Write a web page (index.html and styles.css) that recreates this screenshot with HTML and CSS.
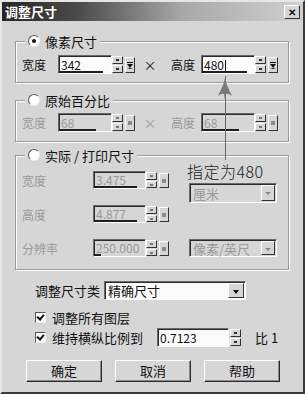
FILE: index.html
```html
<!DOCTYPE html>
<html lang="zh-CN">
<head>
  <meta charset="UTF-8">
  <title>调整尺寸</title>
  <link rel="stylesheet" href="styles.css">
</head>
<body>
<div class="dialog">
  <div class="titlebar">
    <span class="title">调整尺寸</span>
    <span class="close">✕</span>
  </div>

  <div class="content">
    <div class="group g-pixel">
      <div class="legend"><span class="radio on"></span>像素尺寸</div>
      <div class="row">
        <span class="lbl">宽度</span>
        <span class="spin">
          <span class="field" style="--fill: 84%">342</span>
          <span class="updown"><i></i><i></i></span>
          <span class="drop"></span>
        </span>
        <span class="times">×</span>
        <span class="lbl lbl-2">高度</span>
        <span class="spin">
          <span class="field" style="--fill: 86%">480<span class="caret"></span></span>
          <span class="updown"><i></i><i></i></span>
          <span class="drop"></span>
        </span>
      </div>
    </div>

    <div class="group g-percent off">
      <div class="legend"><span class="radio"></span>原始百分比</div>
      <div class="row">
        <span class="lbl">宽度</span>
        <span class="spin">
          <span class="field" style="--fill: 72%">68</span>
          <span class="updown"><i></i><i></i></span>
          <span class="drop"></span>
        </span>
        <span class="times">×</span>
        <span class="lbl lbl-2">高度</span>
        <span class="spin">
          <span class="field" style="--fill: 72%">68</span>
          <span class="updown"><i></i><i></i></span>
          <span class="drop"></span>
        </span>
      </div>
    </div>

    <div class="group g-print off">
      <div class="legend"><span class="radio"></span>实际 / 打印尺寸</div>
      <div class="cols">
        <div class="left">
          <div class="row">
            <span class="lbl lbl-wide">宽度</span>
            <span class="spin small">
              <span class="field" style="--fill: 85%">3.475</span>
              <span class="updown"><i></i><i></i></span>
              <span class="drop"></span>
            </span>
          </div>
          <div class="row">
            <span class="lbl lbl-wide">高度</span>
            <span class="spin small">
              <span class="field" style="--fill: 85%">4.877</span>
              <span class="updown"><i></i><i></i></span>
              <span class="drop"></span>
            </span>
          </div>
          <div class="row">
            <span class="lbl lbl-wide">分辨率</span>
            <span class="spin small">
              <span class="field" style="--fill: 14%">250.000</span>
              <span class="updown"><i></i><i></i></span>
              <span class="drop"></span>
            </span>
          </div>
        </div>
        <div class="right">
          <span class="select unit">厘米<span class="sel-btn"></span></span>
          <span class="select res">像素/英尺<span class="sel-btn"></span></span>
        </div>
      </div>
    </div>

    <div class="line kind">
      <span class="kind-lbl">调整尺寸类</span>
      <span class="select active">精确尺寸<span class="sel-btn"></span></span>
    </div>

    <div class="line check-line layers">
      <span class="check"></span>调整所有图层
    </div>

    <div class="line check-line ratio">
      <span class="check"></span><span class="ratio-lbl">维持横纵比例到</span>
      <span class="spin ratio-spin">
        <span class="field plain">0.7123</span>
        <span class="updown"><i></i><i></i></span>
      </span>
      <span class="ratio-end">比 1</span>
    </div>

    <div class="buttons">
      <span class="btn">确定</span>
      <span class="btn">取消</span>
      <span class="btn">帮助</span>
    </div>
  </div>

  <!-- annotation drawn over the dialog -->
  <div class="note-line"></div>
  <svg class="note-arrow" viewBox="0 0 16 22" width="16" height="22">
    <path d="M8 0 L10 7 Q12 12 15 18 Q11 15 9 16 L8 22 L7 16 Q5 15 1 18 Q4 12 6 7 Z" fill="#7a7a7a"/>
  </svg>
  <div class="note-text">指定为480</div>
</div>
</body>
</html>
```

FILE: styles.css
```css
body {
  margin: 0;
  font-family: "Noto Sans CJK SC", "Noto Sans", sans-serif;
  font-size: 12px;
  color: #111;
}
.dialog {
  position: relative;
  width: 305px;
  height: 394px;
  box-sizing: border-box;
  background: #d6d6d6;
  border: 2px solid;
  border-color: #e6e6e6 #3a3a3a #3a3a3a #e6e6e6;
  overflow: hidden;
}
.titlebar {
  height: 19px;
  display: flex;
  align-items: center;
  justify-content: space-between;
  padding: 0 3px 0 3px;
  background: linear-gradient(to right, #262626 0%, #4a4a4a 25%, #a8a8a8 60%, #d0d0d0 100%);
}
.title {
  color: #fff;
  font-weight: bold;
  font-size: 13px;
  line-height: 19px;
}
.close {
  width: 14px;
  height: 12px;
  margin-top: 1px;
  background: #d6d6d6;
  border: 1px solid;
  border-color: #fff #333 #333 #fff;
  font-size: 10px;
  font-weight: bold;
  line-height: 12px;
  text-align: center;
}
.content {
  padding: 20px 14px 0 13px;
}

/* group frames */
.group {
  border: 1px solid #9a9a9a;
  box-shadow: inset 1px 1px 0 #fff, 1px 1px 0 #fff;
  padding: 0 0 0 6px;
}
.legend {
  display: flex;
  align-items: center;
  gap: 5px;
  width: fit-content;
  height: 16px;
  margin: -9px 0 0 3px;
  padding: 0 3px 0 3px;
  background: #d6d6d6;
  font-size: 13px;
}
.g-pixel .row { margin: 6px 0 8px; }
.g-percent { margin-top: 17px; }
.g-percent .row { margin: 5px 0 9px; }
.g-print { margin-top: 13px; padding-bottom: 12px; }

.radio {
  position: relative;
  width: 10px;
  height: 10px;
  border-radius: 50%;
  background: #fff;
  border: 1px solid;
  border-color: #555 #eee #eee #555;
}
.radio.on::after {
  content: "";
  position: absolute;
  left: 3px;
  top: 3px;
  width: 4px;
  height: 4px;
  border-radius: 50%;
  background: #111;
}

.row {
  display: flex;
  align-items: center;
  height: 19px;
}
.lbl { width: 36px; }
.lbl-2 { width: 30px; margin-left: 6px; }
.lbl-wide { width: 71px; }
.times {
  width: 30px;
  text-align: center;
  font-size: 13px;
}

/* spin box: field + up/down + menu button */
.spin {
  display: inline-flex;
  align-items: center;
}
.field {
  position: relative;
  box-sizing: border-box;
  width: 54px;
  height: 19px;
  padding-left: 2px;
  background: #fbfbfb;
  border: 1px solid;
  border-color: #6a6a6a #fff #fff #6a6a6a;
  box-shadow: inset 1px 1px 0 #2a2a2a;
  line-height: 17px;
  font-size: 12px;
}
.field::after {
  content: "";
  position: absolute;
  left: 0;
  bottom: 0;
  width: var(--fill, 0);
  height: 2px;
  background: #1e1e1e;
}
.caret {
  display: inline-block;
  width: 1px;
  height: 12px;
  margin-left: 1px;
  background: #000;
  vertical-align: -2px;
}
.updown {
  display: flex;
  flex-direction: column;
  gap: 1px;
  width: 11px;
  height: 17px;
}
.updown i {
  flex: 1;
  position: relative;
  background: #d6d6d6;
  border: 1px solid;
  border-color: #fff #333 #333 #fff;
}
.updown i::after {
  content: "";
  position: absolute;
  left: 3px;
  top: 2px;
  width: 3px;
  height: 2px;
  background: #333;
}
.drop {
  position: relative;
  box-sizing: border-box;
  width: 10px;
  height: 16px;
  margin-left: 2px;
  background: #d6d6d6;
  border: 1px solid;
  border-color: #fff #333 #333 #fff;
}
.drop::before {
  content: "";
  position: absolute;
  left: 1px;
  top: 4px;
  width: 6px;
  height: 1px;
  background: #111;
}
.drop::after {
  content: "";
  position: absolute;
  left: 1px;
  top: 6px;
  border-left: 3px solid transparent;
  border-right: 3px solid transparent;
  border-top: 4px solid #111;
  border-bottom: 1px solid #111;
}

/* disabled groups */
.off .lbl, .off .times, .off .field { color: #9a9a9a; }
.off .field { background: #d6d6d6; }
.off .drop::before { display: none; }
.off .drop::after {
  left: 2px;
  top: 5px;
  width: 4px;
  height: 4px;
  border: 0;
  background: #8a8a8a;
}
.off .updown i::after { background: #777; }

.small .field { width: 53px; height: 18px; line-height: 16px; }
.small .updown { height: 16px; }
.small .drop { height: 15px; }

/* print size columns */
.cols {
  display: flex;
  margin-top: 8px;
}
.left {
  display: flex;
  flex-direction: column;
  gap: 16px;
}
.left .row { height: 18px; }
.right {
  display: flex;
  flex-direction: column;
  margin-left: 20px;
}
.select {
  position: relative;
  box-sizing: border-box;
  display: flex;
  align-items: center;
  width: 88px;
  height: 20px;
  padding-left: 3px;
  border: 1px solid;
  border-color: #6a6a6a #fff #fff #6a6a6a;
  box-shadow: inset 1px 1px 0 #2a2a2a;
  color: #9a9a9a;
  font-size: 13px;
}
.select.unit { margin-top: 12px; }
.select.res { margin-top: 36px; height: 18px; }
.sel-btn {
  position: absolute;
  right: 1px;
  top: 1px;
  bottom: 1px;
  width: 14px;
  background: #d6d6d6;
  border: 1px solid;
  border-color: #fff #333 #333 #fff;
  box-sizing: border-box;
}
.sel-btn::after {
  content: "";
  position: absolute;
  left: 3px;
  top: 6px;
  border-left: 3px solid transparent;
  border-right: 3px solid transparent;
  border-top: 3px solid #888;
}
.select.active {
  width: 142px;
  height: 19px;
  background: #fbfbfb;
  color: #111;
}
.select.active .sel-btn { width: 16px; }
.select.active .sel-btn::after {
  left: 4px;
  border-top: 4px solid #111;
}

/* bottom options */
.line {
  display: flex;
  align-items: center;
  padding-left: 20px;
}
.kind {
  margin-top: 11px;
  height: 19px;
  font-size: 13px;
}
.kind-lbl { width: 69px; }
.check-line { font-size: 13px; }
.layers { margin-top: 10px; height: 14px; }
.ratio { margin-top: 4px; height: 19px; }
.check {
  position: relative;
  box-sizing: border-box;
  width: 11px;
  height: 11px;
  margin-right: 6px;
  background: #fbfbfb;
  border: 1px solid;
  border-color: #555 #eee #eee #555;
}
.check::after {
  content: "";
  position: absolute;
  left: 2px;
  top: 0px;
  width: 3px;
  height: 5px;
  border: solid #111;
  border-width: 0 2px 2px 0;
  transform: rotate(40deg);
}
.ratio-lbl { width: 105px; }
.ratio-spin .field {
  width: 72px;
  height: 19px;
  font-size: 12px;
}
.ratio-spin .updown { margin-left: 1px; }
.ratio-end { margin-left: 14px; }

.buttons {
  display: flex;
  gap: 13px;
  margin-top: 13px;
  padding-left: 11px;
}
.btn {
  box-sizing: border-box;
  width: 76px;
  height: 22px;
  background: #d6d6d6;
  border: 1px solid;
  border-color: #fff #2a2a2a #2a2a2a #fff;
  box-shadow: inset -1px -1px 0 #8a8a8a;
  text-align: center;
  line-height: 20px;
  font-size: 13px;
}

/* annotation */
.note-line {
  position: absolute;
  left: 223px;
  top: 74px;
  width: 1px;
  height: 84px;
  background: #666;
}
.note-arrow {
  position: absolute;
  left: 215px;
  top: 76px;
}
.note-text {
  position: absolute;
  left: 185px;
  top: 157px;
  font-size: 16px;
  font-weight: 300;
  color: #222;
  letter-spacing: 0.5px;
}
```
